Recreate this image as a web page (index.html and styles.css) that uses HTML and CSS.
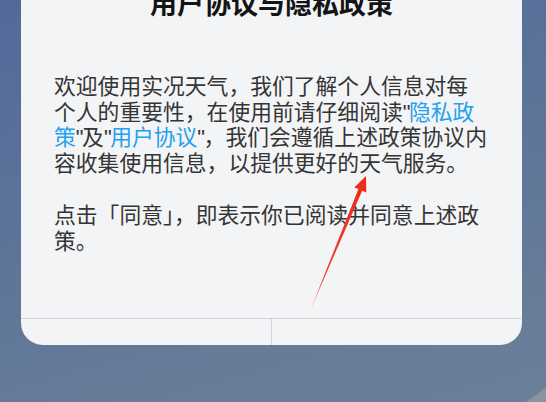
FILE: index.html
```html
<!DOCTYPE html>
<html lang="zh-CN">
<head>
<meta charset="utf-8">
<title>用户协议与隐私政策</title>
<link rel="stylesheet" href="styles.css">
</head>
<body>
<div class="screen">
  <div class="dialog">
    <h1 class="title">用户协议与隐私政策</h1>
    <div class="content">
      <p class="para">欢迎使用实况天气，我们了解个人信息对每个人的重要性，在使用前请仔细阅读<span class="q">"</span><span class="link">隐私政策</span><span class="q">"</span>及<span class="q">"</span><span class="link">用户协议</span><span class="q">"</span>，我们会遵循上述政策协议内容收集使用信息，以提供更好的天气服务。</p>
      <p class="para">点击「同意」，即表示你已阅读并同意上述政策。</p>
    </div>
    <div class="actions">
      <div class="btn"></div>
      <div class="btn btn-right"></div>
    </div>
  </div>
  <svg class="arrow" width="546" height="402" viewBox="0 0 546 402">
    <defs>
      <linearGradient id="fade" x1="310" y1="311" x2="366" y2="176" gradientUnits="userSpaceOnUse">
        <stop offset="0" stop-color="#f7b0a8"/>
        <stop offset="0.25" stop-color="#ef4030"/>
        <stop offset="1" stop-color="#ee2a1c"/>
      </linearGradient>
    </defs>
    <polygon fill="url(#fade)" points="310,311 358.4,189.1 354.3,187.4 366,176 366.3,192.4 362.2,190.7"/>
  </svg>
</div>
</body>
</html>
```

FILE: styles.css
```css
html, body {
  margin: 0;
  padding: 0;
}
body {
  width: 546px;
  height: 402px;
  overflow: hidden;
  font-family: "Noto Sans CJK SC", "Noto Sans", sans-serif;
}
.screen {
  position: relative;
  width: 546px;
  height: 402px;
  overflow: hidden;
  background:
    linear-gradient(to top left, #8a93a0 0, #8a93a0 1.6%, rgba(138,147,160,0) 2%),
    linear-gradient(165deg, #53699a 0%, #5d7499 45%, #677c98 80%, #6b7f99 100%);
}
.dialog {
  margin: -40px 0 0 21px;
  padding-top: 29px;
  width: 501px;
  background: #f3f4f6;
  border-radius: 0 0 22px 22px;
  overflow: hidden;
  display: flex;
  flex-direction: column;
}
.title {
  margin: 0;
  font-size: 27px;
  line-height: 27px;
  font-weight: 700;
  color: #141414;
  text-align: center;
}
.content {
  padding: 56px 33px 0;
}
.para {
  margin: 0 0 27px;
  font-size: 21.8px;
  line-height: 25.5px;
  color: #353535;
}
.para:last-child {
  margin-bottom: 0;
}
.q {
  font-family: "Liberation Sans", sans-serif;
  letter-spacing: -1.5px;
  line-height: 0;
}
.link {
  color: #23a0ee;
}
.actions {
  margin-top: 66px;
  border-top: 1px solid #d3d4d8;
  display: flex;
  height: 26px;
}
.btn {
  flex: 1;
}
.btn-right {
  border-left: 1px solid #d3d4d8;
}
.arrow {
  position: absolute;
  left: 0;
  top: 0;
}
```
